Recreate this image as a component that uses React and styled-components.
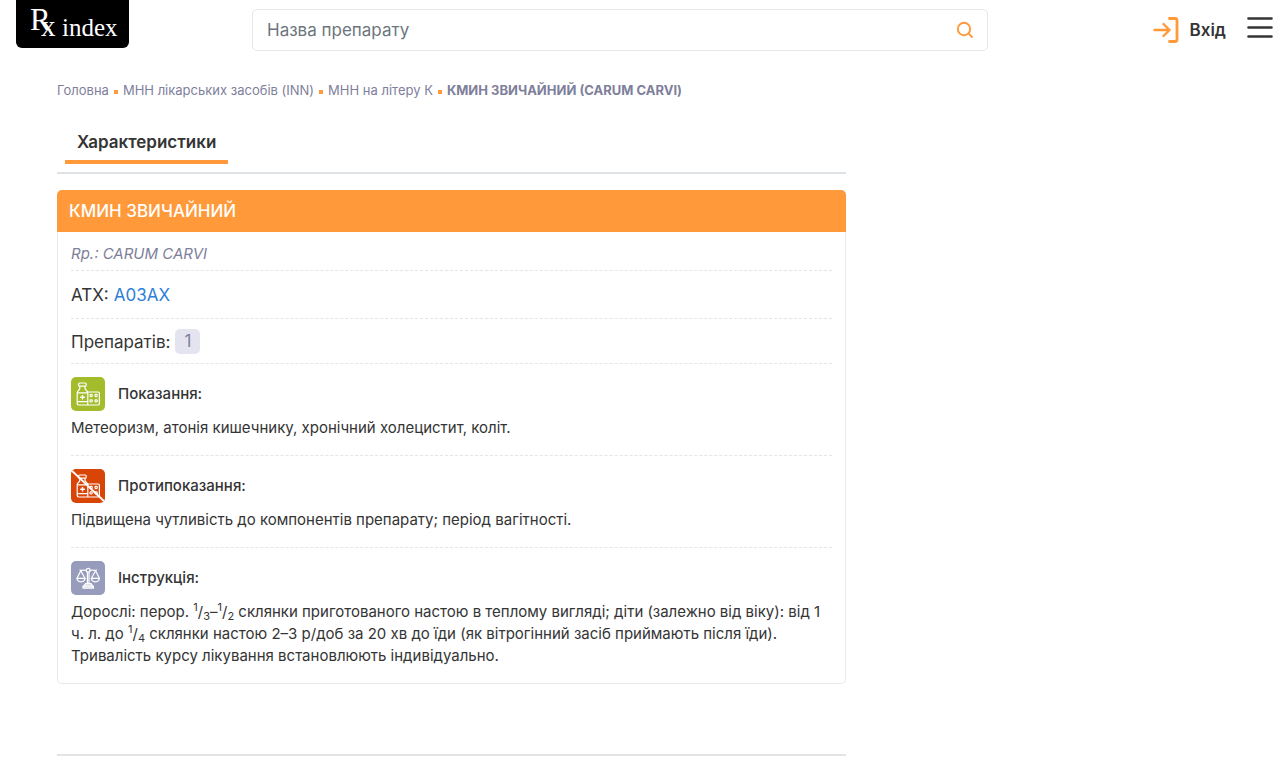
import React from "react";
import styled, { createGlobalStyle } from "styled-components";

const GlobalStyle = createGlobalStyle`
  *, *::before, *::after { box-sizing: border-box; }
  body {
    margin: 0;
    background: #fff;
    color: #343434;
    font-family: Inter, "Liberation Sans", sans-serif;
    font-size: 17px;
    line-height: 24px;
  }
  a { color: inherit; text-decoration: none; }
  h1, h2, p { margin: 0; }
`;

const Header = styled.header`
  display: flex;
  align-items: flex-start;
  padding: 0 7px 0 16px;
  height: 60px;
`;

const Logo = styled.a`
  flex: none;
  width: 113px;
  height: 48px;
  border-radius: 0 0 6px 6px;
  background: #000;
  svg { display: block; }
`;

const Search = styled.form`
  flex: 1;
  display: flex;
  align-items: center;
  height: 42px;
  margin: 9px 165px 0 123px;
  border: 1px solid #e6e6e6;
  border-radius: 5px;
`;

const SearchInput = styled.input`
  flex: 1;
  min-width: 0;
  height: 40px;
  padding: 0 14px;
  border: 0;
  outline: 0;
  background: transparent;
  color: #343434;
  font: inherit;
  &::placeholder { color: #6c757d; opacity: 1; }
`;

const IconButton = styled.button`
  display: flex;
  align-items: center;
  justify-content: center;
  width: ${(p) => p.$width}px;
  height: 40px;
  padding: 0;
  border: 0;
  background: none;
  cursor: pointer;
`;

const Account = styled.nav`
  flex: none;
  display: flex;
  align-items: center;
  gap: 21px;
  margin-top: 10px;
  height: 40px;
`;

const Login = styled.a`
  display: flex;
  align-items: center;
  gap: 11px;
  height: 40px;
  font-weight: 600;
`;

const Page = styled.div`
  display: grid;
  grid-template-columns: minmax(0, 1fr) 320px;
  gap: 57px;
  padding: 20px 57px 24px;
`;

const Crumbs = styled.ol`
  display: flex;
  align-items: center;
  gap: 5px;
  margin: 0;
  padding: 0;
  list-style: none;
  font-size: 13px;
  line-height: 20px;
  color: #7e809b;
`;

const Crumb = styled.li`
  display: flex;
  align-items: center;
  gap: 5px;
  white-space: nowrap;
  font-weight: ${(p) => (p.$current ? 700 : 400)};
  &:not(:first-child)::before {
    content: "";
    width: 4px;
    height: 4px;
    margin-top: 3px;
    background: #ff993a;
  }
`;

const Tabs = styled.div`
  display: flex;
  margin-top: 20px;
  padding: 0 8px 8px;
  border-bottom: 2px solid #dfe2e4;
`;

const Tab = styled.button`
  padding: 10px 12px 6px;
  border: 0;
  border-bottom: 4px solid #ff993a;
  background: none;
  color: inherit;
  font: inherit;
  font-weight: 600;
`;

const Card = styled.article`
  margin-top: 16px;
  border: 1px solid #e9e9eb;
  border-top: 0;
  border-radius: 5px;
`;

const CardTitle = styled.h1`
  margin: 0 -1px;
  padding: 9px 12px;
  border-radius: 5px 5px 0 0;
  background: #ff993a;
  color: #fff;
  font-size: 17px;
  line-height: 24px;
  font-weight: 500;
`;

const CardBody = styled.div`
  padding: 0 13px;
`;

const Row = styled.div`
  display: flex;
  align-items: center;
  gap: 5px;
  padding: ${(p) => p.$top}px 0 ${(p) => p.$bottom}px;
  border-bottom: 1px dashed #e4e4e9;
`;

const Latin = styled.em`
  font-size: 15px;
  line-height: 22px;
  color: #7e809b;
`;

const CodeLink = styled.a`
  color: #2e7fd9;
`;

const Count = styled.a`
  padding: 0 9px;
  border-radius: 5px;
  background: #e4e4f0;
  color: #7e809b;
  line-height: 25px;
`;

const Section = styled.section`
  padding: 13px 0 16px;
  border-bottom: 1px dashed #e4e4e9;
  &:last-child { border-bottom: 0; }
`;

const SectionHead = styled.h2`
  display: flex;
  align-items: center;
  gap: 13px;
  margin-bottom: 6px;
  font-size: 15px;
  line-height: 22px;
  font-weight: 500;
`;

const Tile = styled.svg`
  flex: none;
  width: 34px;
  height: 34px;
  border-radius: 5px;
  background: ${(p) => p.$color};
`;

const Text = styled.p`
  font-size: 15px;
  line-height: 22px;
  sup, sub { font-size: 11px; line-height: 0; position: relative; vertical-align: baseline; }
  sup { top: -6px; }
  sub { bottom: -3px; }
`;

const Divider = styled.hr`
  height: 2px;
  margin: 70px 0 0;
  border: 0;
  background: #e4e4e6;
`;

function Medicine({ color, crossed }) {
  return (
    <Tile $color={color} viewBox="0 0 34 34" fill="none" stroke="#fff" strokeWidth="1.2" strokeLinejoin="round" aria-hidden="true">
      <rect x="7.6" y="6" width="7.6" height="3.2" rx="1" />
      <path d="M8.8 9.2v2.4c0 1.4-2.6 2-2.600 4v11c0 .9.5 1.4 1.4 1.4h19.6c.7 0 1.2-.5 1.2-1.2V16.2c0-.7-.5-1.2-1.2-1.2H16.8M14 9.2v2.4c0 1.4 2.8 2 2.8 4V28M6.2 15.8H16.8M6.2 24.6H16.8" />
      <path d="M11.5 18v4.6M9.2 20.3H13.8" strokeWidth="1.4" />
      <rect x="19" y="17.4" width="2.2" height="2.2" rx=".8" />
      <rect x="24" y="17.4" width="2.2" height="2.2" rx=".8" />
      <rect x="19" y="22.8" width="2.2" height="2.2" rx=".8" />
      <rect x="24" y="22.8" width="2.2" height="2.2" rx=".8" />
      {crossed && <path d="M0 1l34 32" strokeWidth="1.9" />}
    </Tile>
  );
}

function Scales() {
  return (
    <Tile $color="#979cbc" viewBox="0 0 34 34" fill="none" stroke="#fff" strokeWidth="1.2" strokeLinejoin="round" strokeLinecap="round" aria-hidden="true">
      <circle cx="17.2" cy="9.3" r="1.9" />
      <path d="M15.3 9.5c-2.4-1.4-4 .9-6.3-.5M19.1 9.5c2.4-1.4 4 .9 6.3-.5M16.4 11.4v11M18 11.4v11" />
      <path d="M9.8 9.8L6 17.3h8L9.8 9.8zM24.6 9.8l-4.2 7.5h8l-3.8-7.5z" />
      <path d="M6 17.3c.3 4.7 7.7 4.7 8 0M20.4 17.3c.3 4.7 7.7 4.7 8 0" />
      <path d="M14.3 22.6h5.8l1.5 2.4h-8.8zM12 25.2h10.4v2H12z" fill="#fff" fillOpacity=".6" />
    </Tile>
  );
}

export default function App() {
  return (
    <>
      <GlobalStyle />
      <Header>
        <Logo href="#" aria-label="Rx index">
          <svg width="113" height="48" fill="#fff" fontFamily='"Liberation Serif", serif'>
            <text x="14" y="30" fontSize="31">R</text>
            <text x="25" y="36" fontSize="29">x</text>
            <text x="46" y="36" fontSize="25">index</text>
          </svg>
        </Logo>
        <Search role="search" onSubmit={(e) => e.preventDefault()}>
          <SearchInput type="text" aria-label="Назва препарату" placeholder="Назва препарату" />
          <IconButton $width={43} type="submit" aria-label="Пошук">
            <svg width="18" height="18" fill="none" stroke="#ff993a" strokeWidth="1.9" strokeLinecap="round">
              <circle cx="8" cy="8" r="6.2" />
              <path d="M12.7 12.7l3.3 3.3" />
            </svg>
          </IconButton>
        </Search>
        <Account>
          <Login href="#">
            <svg width="26" height="28" fill="none" stroke="#ff993a" strokeWidth="2.8" strokeLinecap="round" strokeLinejoin="round">
              <path d="M1.5 14h15M10.5 8l6 6-6 6" strokeWidth="2.4" />
              <path d="M16.5 2.5h5.5a2 2 0 0 1 2 2v19a2 2 0 0 1-2 2h-5.5" />
            </svg>
            Вхід
          </Login>
          <IconButton $width={26} type="button" aria-label="Меню">
            <svg width="26" height="26" stroke="#343434" strokeWidth="2.6" strokeLinecap="round">
              <path d="M1.5 1.5h23M1.5 10.5h23M1.5 19.5h23" />
            </svg>
          </IconButton>
        </Account>
      </Header>
      <Page>
        <main>
          <nav aria-label="Навігація">
            <Crumbs>
              <Crumb><a href="#">Головна</a></Crumb>
              <Crumb><a href="#">МНН лікарських засобів (INN)</a></Crumb>
              <Crumb><a href="#">МНН на літеру К</a></Crumb>
              <Crumb $current>КМИН ЗВИЧАЙНИЙ (CARUM CARVI)</Crumb>
            </Crumbs>
          </nav>
          <Tabs role="tablist">
            <Tab type="button" role="tab" aria-selected="true">Характеристики</Tab>
          </Tabs>
          <Card>
            <CardTitle>КМИН ЗВИЧАЙНИЙ</CardTitle>
            <CardBody>
              <Row $top={11} $bottom={5}><Latin>Rp.: CARUM CARVI</Latin></Row>
              <Row $top={12} $bottom={11}>АТХ: <CodeLink href="#">A03AX</CodeLink></Row>
              <Row $top={10} $bottom={9}>Препаратів: <Count href="#">1</Count></Row>
              <Section>
                <SectionHead><Medicine color="#a3bc2c" />Показання:</SectionHead>
                <Text>Метеоризм, атонія кишечнику, хронічний холецистит, коліт.</Text>
              </Section>
              <Section>
                <SectionHead><Medicine color="#d94407" crossed />Протипоказання:</SectionHead>
                <Text>Підвищена чутливість до компонентів препарату; період вагітності.</Text>
              </Section>
              <Section>
                <SectionHead><Scales />Інструкція:</SectionHead>
                <Text>
                  Дорослі: перор. <sup>1</sup>/<sub>3</sub>–<sup>1</sup>/<sub>2</sub> склянки приготованого настою в теплому вигляді; діти (залежно від віку): від 1 ч. л. до <sup>1</sup>/<sub>4</sub> склянки настою 2–3 р/доб за 20 хв до їди (як вітрогінний засіб приймають після їди). Тривалість курсу лікування встановлюють індивідуально.
                </Text>
              </Section>
            </CardBody>
          </Card>
          <Divider />
        </main>
      </Page>
    </>
  );
}
